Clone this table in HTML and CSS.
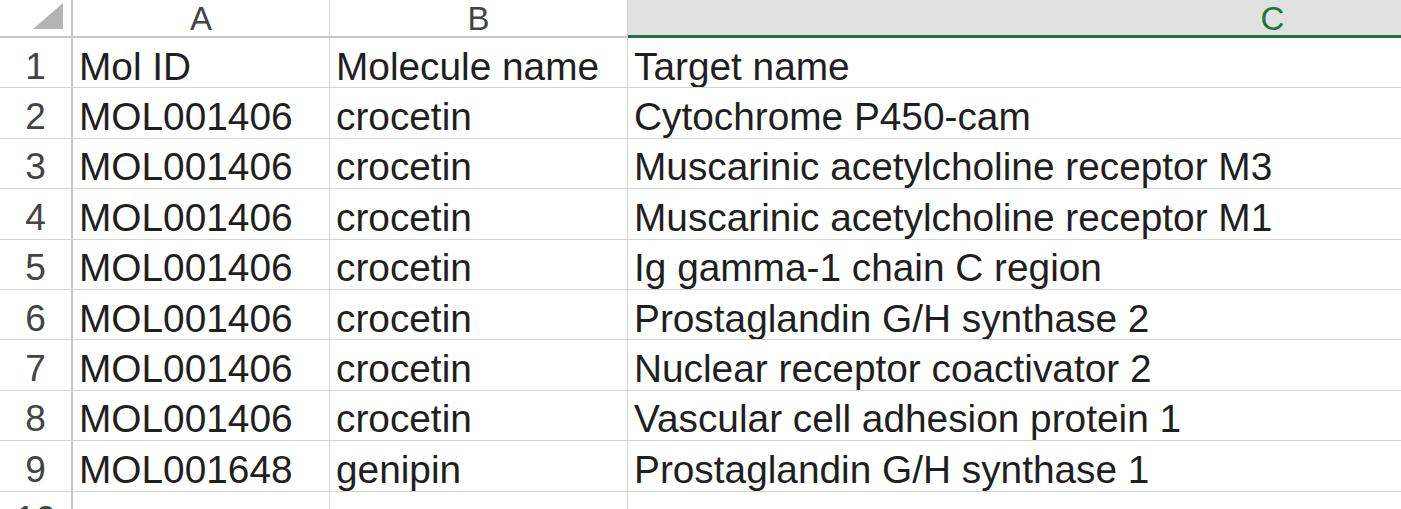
FILE: index.html
```html
<!DOCTYPE html>
<html>
<head>
<meta charset="utf-8">
<link rel="stylesheet" href="styles.css">
</head>
<body>
<div class="sheet">
  <div class="corner"><svg class="tri" width="30" height="26" viewBox="0 0 30 26"><polygon points="0,26 30,26 30,0" fill="#b4b4b4"/></svg></div>
  <div class="colhead">A</div>
  <div class="colhead">B</div>
  <div class="colhead sel">C</div>

  <div class="rowhead">1</div><div class="cell">Mol ID</div><div class="cell">Molecule name</div><div class="cell">Target name</div>
  <div class="rowhead">2</div><div class="cell">MOL001406</div><div class="cell">crocetin</div><div class="cell">Cytochrome P450-cam</div>
  <div class="rowhead">3</div><div class="cell">MOL001406</div><div class="cell">crocetin</div><div class="cell">Muscarinic acetylcholine receptor M3</div>
  <div class="rowhead">4</div><div class="cell">MOL001406</div><div class="cell">crocetin</div><div class="cell">Muscarinic acetylcholine receptor M1</div>
  <div class="rowhead">5</div><div class="cell">MOL001406</div><div class="cell">crocetin</div><div class="cell">Ig gamma-1 chain C region</div>
  <div class="rowhead">6</div><div class="cell">MOL001406</div><div class="cell">crocetin</div><div class="cell">Prostaglandin G/H synthase 2</div>
  <div class="rowhead">7</div><div class="cell">MOL001406</div><div class="cell">crocetin</div><div class="cell">Nuclear receptor coactivator 2</div>
  <div class="rowhead">8</div><div class="cell">MOL001406</div><div class="cell">crocetin</div><div class="cell">Vascular cell adhesion protein 1</div>
  <div class="rowhead">9</div><div class="cell">MOL001648</div><div class="cell">genipin</div><div class="cell">Prostaglandin G/H synthase 1</div>
  <div class="rowhead">10</div><div class="cell"></div><div class="cell"></div><div class="cell"></div>
</div>
</body>
</html>
```
FILE: styles.css
```css
html, body {
  margin: 0;
  padding: 0;
  background: #ffffff;
  overflow: hidden;
}
.sheet {
  display: grid;
  grid-template-columns: 73px 257px 298px 1290px;
  grid-template-rows: 38px repeat(10, 50.4px);
  width: 1918px;
  font-family: "Liberation Sans", Arial, sans-serif;
  color: #1f1f1f;
}
.corner {
  background: #ffffff;
  border-right: 2px solid #c8c8c8;
  border-bottom: 2px solid #c8c8c8;
  display: flex;
  align-items: flex-end;
  justify-content: flex-end;
  padding: 0 8px 7px 0;
  box-sizing: border-box;
}
.tri { display: block; }
.colhead {
  background: #ffffff;
  border-right: 1px solid #d4d4d4;
  border-bottom: 2px solid #c8c8c8;
  box-sizing: border-box;
  display: flex;
  align-items: center;
  justify-content: center;
  font-size: 33px;
  color: #444444;
  line-height: 1;
  padding-top: 1px;
}
.colhead.sel {
  background: #e1e1e1;
  color: #217346;
  border-bottom: 3px solid #217346;
}
.rowhead {
  border-right: 2px solid #c8c8c8;
  border-bottom: 1px solid #d4d4d4;
  box-sizing: border-box;
  display: flex;
  align-items: center;
  justify-content: center;
  font-size: 37px;
  color: #444444;
  padding-top: 8px;
}
.cell {
  border-right: 1px solid #d4d4d4;
  border-bottom: 1px solid #d4d4d4;
  box-sizing: border-box;
  display: flex;
  align-items: center;
  padding: 8px 0 0 6px;
  font-size: 38.8px;
  white-space: nowrap;
  overflow: hidden;
}
```
